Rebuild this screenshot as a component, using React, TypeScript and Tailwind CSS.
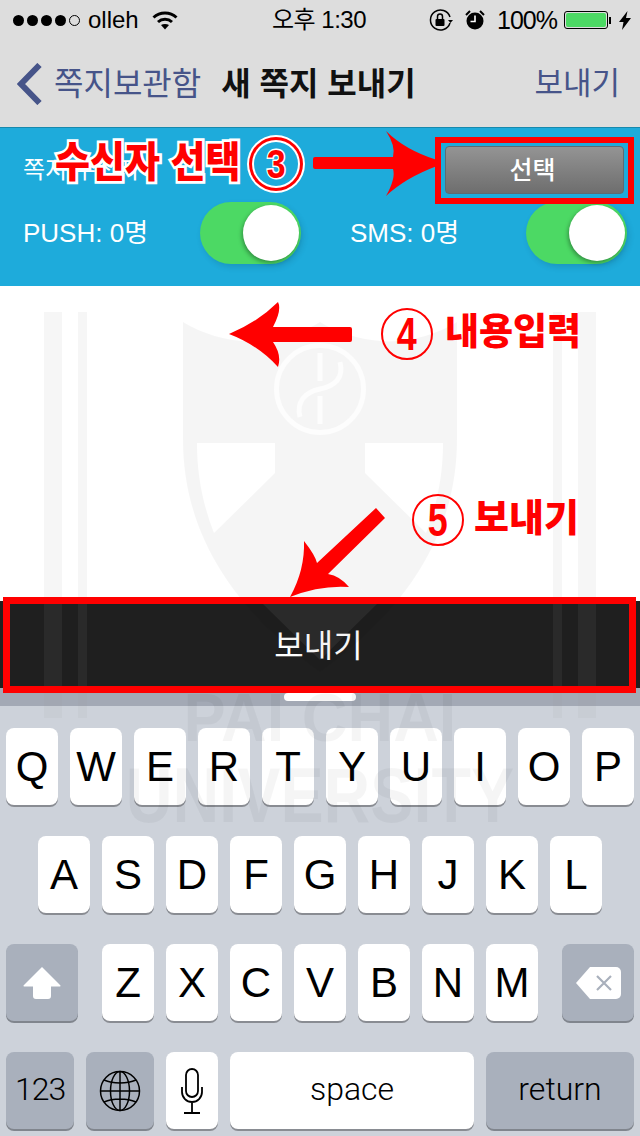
const KR = "font-['Liberation_Sans','Noto_Sans_CJK_KR',sans-serif]";

const row1 = ['Q', 'W', 'E', 'R', 'T', 'Y', 'U', 'I', 'O', 'P'];
const row2 = ['A', 'S', 'D', 'F', 'G', 'H', 'J', 'K', 'L'];
const row3 = ['Z', 'X', 'C', 'V', 'B', 'N', 'M'];

function Key({ label }: { label: string }) {
  return (
    <div className="w-[52px] h-[77px] rounded-[8px] bg-white shadow-[0_2px_0_#898c92] flex items-center justify-center text-[42px] text-black">
      {label}
    </div>
  );
}

function GrayKey({ className, children }: { className: string; children: React.ReactNode }) {
  return (
    <div className={`h-[77px] rounded-[8px] bg-[#a9b0bc] shadow-[0_2px_0_#80858d] flex items-center justify-center text-black ${className}`}>
      {children}
    </div>
  );
}

function Toggle() {
  return (
    <div className="w-[101px] h-[62px] rounded-full bg-[#4cd964] flex items-center justify-end pr-[2px] shadow-[2px_3px_6px_rgba(0,0,0,0.12)]">
      <div className="w-[56px] h-[56px] rounded-full bg-white shadow-[-1px_2px_4px_rgba(0,0,0,0.35)]" />
    </div>
  );
}

function StatusBar() {
  return (
    <div className="h-10 flex items-center pl-[13px] text-black">
      <div className="w-[67px] flex justify-between">
        {[0, 1, 2, 3].map((i) => (
          <span key={i} className="w-[11px] h-[11px] rounded-full bg-black" />
        ))}
        <span className="w-[11px] h-[11px] rounded-full border border-black" />
      </div>
      <span className="ml-2 w-[52px] text-[24px] leading-none font-['Liberation_Sans',sans-serif]">olleh</span>
      <svg className="ml-3 w-[26px] h-[19px]" viewBox="0 0 26 19" fill="none" stroke="#000" strokeWidth="3">
        <path d="M1.500 6.500C8 .5 18 .5 24.500 6.500" />
        <path d="M6 11c4-3.600 10-3.600 14 0" />
        <path d="M13 18.500l-4-4.500c2.300-1.500 5.700-1.500 8 0z" fill="#000" stroke="none" />
      </svg>
      <span className={`ml-[94px] w-[157px] text-[24px] tracking-[-0.5px] leading-none ${KR}`}>오후 1:30</span>
      <svg className="w-[24px] h-[22px]" viewBox="0 0 24 22" fill="none" stroke="#000" strokeWidth="1.500">
        <path d="M21 8a10 10 0 1 0 0 6" />
        <path d="M19 11h5l-2.500 3z" fill="#000" stroke="none" />
        <rect x="6.500" y="10" width="9" height="7" rx="1" fill="#000" stroke="none" />
        <path d="M8.500 10V7.500a2.500 2.500 0 0 1 5 0V10" />
      </svg>
      <svg className="ml-3 w-[20px] h-[20px]" viewBox="0 0 20 20">
        <circle cx="10" cy="11" r="8.500" fill="#000" />
        <path d="M10 5.500V11.500H5.500" fill="none" stroke="#fff" strokeWidth="1.600" />
        <path d="M1 5l4-4M19 5l-4-4" stroke="#000" strokeWidth="2" />
      </svg>
      <span className="ml-3 w-[67px] text-[25px] tracking-[-1px] leading-none font-['Liberation_Sans',sans-serif]">100%</span>
      <div className="w-[44px] h-[18px] rounded-[3px] border border-black p-[1px]">
        <div className="w-full h-full rounded-[2px] bg-[#4cd964]" />
      </div>
      <span className="w-[2px] h-[7px] bg-black ml-[1px]" />
      <svg className="ml-2 w-[12px] h-[19px]" viewBox="0 0 12 19">
        <path d="M8.500 0L0 11h4.500L3 19l9-12H7z" fill="#000" />
      </svg>
    </div>
  );
}

function NavBar() {
  return (
    <div className="h-[87px] flex items-center pl-[17px] pr-[20px]">
      <svg className="w-[25px] h-[42px]" viewBox="0 0 25 42" fill="none" stroke="#465489" strokeWidth="6">
        <path d="M22.500 2L4 21l18.500 19" />
      </svg>
      <span className={`ml-[12px] text-[32px] leading-none text-[#465489] ${KR}`}>쪽지보관함</span>
      <span className={`ml-[20px] text-[32px] leading-none font-bold text-[#111] ${KR}`}>새 쪽지 보내기</span>
      <span className={`ml-auto text-[31px] leading-none text-[#465489] ${KR}`}>보내기</span>
    </div>
  );
}

function RecipientPanel() {
  return (
    <div className="h-[159px] border-t border-[#1789ad] bg-[#1eabdb] pl-[23px] pr-[13px] pt-[18px] text-white">
      <div className="flex items-center justify-between">
        <span className={`text-[24px] leading-none ${KR}`}>쪽지 수신자</span>
        <div className="mr-[3px] w-[179px] h-[48px] pr-[4px] rounded-[4px] border border-[#5f6a70] bg-gradient-to-b from-[#949494] to-[#6e6e6e] flex items-center justify-center">
          <span className={`text-[25px] leading-none font-medium ${KR}`}>선택</span>
        </div>
      </div>
      <div className="mt-2 flex items-center">
        <div className="w-[278px] flex items-center justify-between">
          <span className={`text-[26px] leading-none ${KR}`}>PUSH: 0명</span>
          <Toggle />
        </div>
        <div className="ml-[49px] w-[277px] flex items-center justify-between">
          <span className={`text-[26px] leading-none ${KR}`}>SMS: 0명</span>
          <Toggle />
        </div>
      </div>
    </div>
  );
}

function Keyboard() {
  return (
    <div className="flex-1 bg-[#cdd2da] pt-[22px] flex flex-col gap-[31px] font-['Liberation_Sans',sans-serif]">
      <div className="flex justify-center gap-3">
        {row1.map((k) => <Key key={k} label={k} />)}
      </div>
      <div className="flex justify-center gap-3">
        {row2.map((k) => <Key key={k} label={k} />)}
      </div>
      <div className="flex justify-center gap-3 px-[6px]">
        <GrayKey className="w-[72px] mr-3">
          <svg className="w-[38px] h-[32px]" viewBox="0 0 38 32">
            <path d="M19 0L37 18a.8.8 0 0 1-.6 1.500H28V29a3 3 0 0 1-3 3H13a3 3 0 0 1-3-3V19.500H1.600A.8.8 0 0 1 1 18z" fill="#fff" />
          </svg>
        </GrayKey>
        {row3.map((k) => <Key key={k} label={k} />)}
        <GrayKey className="w-[72px] ml-3">
          <svg className="w-[45px] h-[32px]" viewBox="0 0 45 32">
            <path d="M14 0H40a5 5 0 0 1 5 5V27a5 5 0 0 1-5 5H14L0 16z" fill="#fff" />
            <path d="M21 9l14 14M35 9L21 23" stroke="#a9b0bc" strokeWidth="2.200" />
          </svg>
        </GrayKey>
      </div>
      <div className="flex justify-center gap-3 px-[6px]">
        <GrayKey className="w-[68px] pb-[4px] text-[32px] tracking-[-1px] font-['Roboto',sans-serif] font-light">123</GrayKey>
        <GrayKey className="w-[68px]">
          <svg className="w-[42px] h-[42px]" viewBox="0 0 42 42" fill="none" stroke="#000" strokeWidth="1.500">
            <circle cx="21" cy="21" r="19.500" />
            <ellipse cx="21" cy="21" rx="9.500" ry="19.500" />
            <path d="M21 1.500V40.500M1.500 21H40.500M5 10c9 4 23 4 32 0M5 32c9-4 23-4 32 0" />
          </svg>
        </GrayKey>
        <Key label="" />
        <div className="w-[244px] h-[77px] pb-[4px] rounded-[8px] bg-white shadow-[0_2px_0_#898c92] flex items-center justify-center text-[32px] text-black font-['Roboto',sans-serif] font-light">
          space
        </div>
        <GrayKey className="w-[148px] pb-[4px] text-[32px] font-['Roboto',sans-serif] font-light">return</GrayKey>
      </div>
    </div>
  );
}

// faint university crest that sits over the whole lower half of the page
function Watermark() {
  return (
    <div className="absolute inset-0 pointer-events-none">
      <svg className="absolute inset-0 w-[640px] h-[1136px]" viewBox="0 0 640 1136">
        <path
          fillRule="evenodd"
          fill="#000"
          fillOpacity="0.04"
          d="M183 322C205 336 240 345 268 340C290 337 307 330 320 322C333 330 350 337 372 340C400 345 435 336 457 322V440C457 520 420 600 320 672C220 600 183 520 183 440Z
             M197 443H275V473L214 533C203 505 197 475 197 443Z
             M443 443H365V473L426 533C437 505 443 475 443 443Z"
        />
        <circle cx="320" cy="389" r="43.500" fill="none" stroke="#fff" strokeOpacity="0.75" strokeWidth="5" />
        <path d="M320 353V381M320 396V424M340 362C344 378 335 386 320 389C305 392 296 402 300 417" fill="none" stroke="#fff" strokeOpacity="0.75" strokeWidth="5" />
        <path d="M320 548L377 604 320 660 263 604Z" fill="#fff" fillOpacity="0.06" />
        <g fill="#a0a0a0" fillOpacity="0.09">
          <rect x="44" y="312" width="18" height="406" />
          <rect x="78" y="312" width="9" height="406" />
          <rect x="553" y="312" width="9" height="406" />
          <rect x="578" y="312" width="18" height="406" />
        </g>
      </svg>
      <div className="absolute left-0 right-0 top-[683px] text-center text-black/[0.04] font-bold font-['Liberation_Sans',sans-serif] text-[68px] leading-none scale-x-[0.93]">
        PAI CHAI
      </div>
      <div className="absolute left-0 right-0 top-[756px] text-center text-black/[0.04] font-bold font-['Liberation_Sans',sans-serif] text-[78px] leading-none scale-x-[0.83]">
        UNIVERSITY
      </div>
    </div>
  );
}

function Circled({ n, className }: { n: string; className: string }) {
  return (
    <div className={`absolute w-[52px] h-[52px] rounded-full border-2 border-[#f00] flex items-center justify-center text-[46px] leading-none font-bold text-[#f00] font-['Liberation_Sans',sans-serif] ${className}`}>
      <span className="scale-x-[0.78]">{n}</span>
    </div>
  );
}

// the red notes drawn on top of the screenshot
function Annotations() {
  return (
    <div className="absolute inset-0 pointer-events-none">
      <svg className="absolute inset-0 w-[640px] h-[1136px]" viewBox="0 0 640 1136" fill="#f00">
        <path d="M386 131Q405 150 437 160L440 163L437 166Q405 178 386 196Q396 178 393 169H315a2 2 0 0 1-2-2V159a2 2 0 0 1 2-2H393Q396 146 386 131Z" />
        <path d="M229 334Q258 322 278 302Q282 310 273 327H350a2 2 0 0 1 2 2V340a2 2 0 0 1-2 2H273Q282 355 278 367Q258 345 229 334Z" />
        <path d="M376 508L385 518L328 574Q340 576 349 587Q320 585 290 597Q305 570 304 541Q315 555 317 563Z" />
      </svg>
      <div className={`absolute left-[55px] top-[138px] text-[38px] leading-[50px] font-black text-[#f00] scale-y-[1.1] [-webkit-text-stroke:5px_white] [paint-order:stroke_fill] whitespace-nowrap ${KR}`}>
        수신자 선택
      </div>
      <div className="absolute left-[247px] top-[135px] w-[58px] h-[58px] rounded-full bg-white p-[2px]">
        <div className="w-full h-full rounded-full bg-[#f00] p-[3px]">
          <div className="w-full h-full rounded-full bg-white p-[2px]">
            <div className="w-full h-full rounded-full bg-[#1eabdb] flex items-center justify-center">
              <span className="text-[40px] leading-none font-bold text-[#f00] font-['Liberation_Sans',sans-serif] scale-x-[0.85] [-webkit-text-stroke:3px_white] [paint-order:stroke_fill]">3</span>
            </div>
          </div>
        </div>
      </div>
      <Circled n="4" className="left-[381px] top-[308px]" />
      <div className={`absolute left-[445px] top-[310px] text-[37px] leading-[46px] font-black text-[#f00] whitespace-nowrap ${KR}`}>
        내용입력
      </div>
      <Circled n="5" className="left-[412px] top-[494px]" />
      <div className={`absolute left-[474px] top-[494px] text-[38px] leading-[48px] font-black text-[#f00] whitespace-nowrap ${KR}`}>
        보내기
      </div>
      <div className="absolute left-[435px] top-[137px] w-[199px] h-[67px] border-[6px] border-[#f00]" />
      <div className="absolute left-[3px] top-[597px] w-[633px] h-[96px] border-[7px] border-[#f00]" />
    </div>
  );
}

export default function App() {
  return (
    <div className="relative w-[640px] h-[1136px] overflow-hidden bg-white flex flex-col">
      <div className="bg-[#dddddd]">
        <StatusBar />
        <NavBar />
      </div>
      <RecipientPanel />
      <div className="h-[315px] bg-white" />
      <div className={`h-[87px] pt-[2px] pr-[3px] bg-[#1f1f1f] flex items-center justify-center text-white text-[32px] ${KR}`}>
        보내기
      </div>
      <div className="h-[18px] bg-[#a3a9b5] flex justify-center pt-[5px]">
        <div className="w-[72px] h-[8px] rounded-[4px] bg-white" />
      </div>
      <Keyboard />
      <div className="absolute left-[166px] top-[1052px] w-[52px] h-[77px] flex items-center justify-center">
        <svg className="w-[24px] h-[46px]" viewBox="0 0 24 46" fill="none" stroke="#000" strokeWidth="1.800">
          <rect x="6" y="1" width="12" height="28" rx="6" />
          <path d="M2 19v5a10 10 0 0 0 20 0v-5M12 34v10M4 45H20" />
        </svg>
      </div>
      <Watermark />
      <Annotations />
    </div>
  );
}
